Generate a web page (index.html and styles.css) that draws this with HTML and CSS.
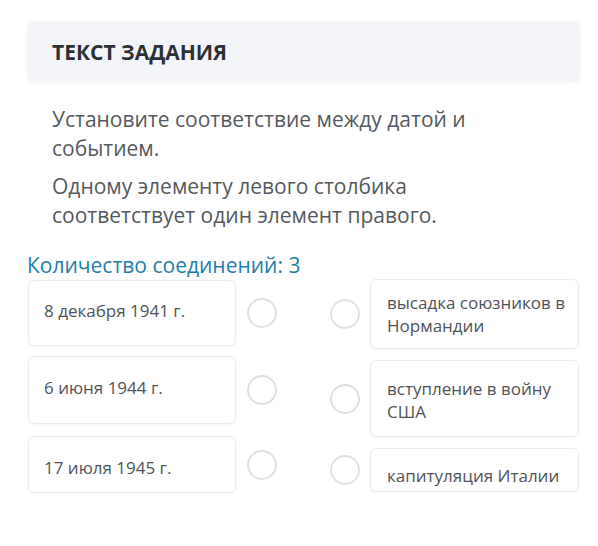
FILE: index.html
```html
<!DOCTYPE html>
<html lang="ru">
<head>
<meta charset="utf-8">
<title>Текст задания</title>
<link rel="stylesheet" href="styles.css">
</head>
<body>
<div class="page">
  <div class="task-head">
    <h2 class="task-title">ТЕКСТ ЗАДАНИЯ</h2>
  </div>
  <div class="task-text">
    <p>Установите соответствие между датой и событием.</p>
    <p>Одному элементу левого столбика соответствует один элемент правого.</p>
  </div>
  <div class="count">Количество соединений: 3</div>
  <div class="match">
    <div class="col col-left">
      <div class="row"><div class="card">8 декабря 1941 г.</div><span class="dot"></span></div>
      <div class="row"><div class="card">6 июня 1944 г.</div><span class="dot"></span></div>
      <div class="row"><div class="card">17 июля 1945 г.</div><span class="dot"></span></div>
    </div>
    <div class="col col-right">
      <div class="row"><span class="dot"></span><div class="card">высадка союзников в Нормандии</div></div>
      <div class="row"><span class="dot"></span><div class="card">вступление в войну США</div></div>
      <div class="row"><span class="dot"></span><div class="card">капитуляция Италии</div></div>
    </div>
  </div>
</div>
</body>
</html>
```

FILE: styles.css
```css
* { box-sizing: border-box; }
html, body { margin: 0; padding: 0; background: #ffffff; }
body { font-family: "Open Sans", "Noto Sans", sans-serif; color: #4f5357; }

.page { width: 598px; padding-top: 21px; }

.task-head {
  margin: 0 18px 0 27px;
  height: 61px;
  background: #f3f5f8;
  border-radius: 7px;
  box-shadow: 0 1px 3px rgba(0, 0, 0, 0.05);
  display: flex;
  align-items: center;
  padding-left: 25px;
}
.task-title {
  margin: 0;
  font-size: 21px;
  font-weight: 700;
  color: #2d3136;
}

.task-text {
  padding: 23px 98px 0 52px;
}
.task-text p {
  margin: 0 0 9px 0;
  font-size: 21px;
  line-height: 29px;
  color: #55595d;
}
.task-text p:last-child { margin-bottom: 0; }

.count {
  margin: 22px 0 0 27px;
  font-size: 21px;
  line-height: 26px;
  color: #1f7ea8;
}

.match {
  display: flex;
  gap: 53px;
  padding-left: 28px;
  margin-top: 2px;
}
.col {
  width: 249px;
  display: flex;
  flex-direction: column;
}
.row {
  display: flex;
  align-items: center;
}
.col-left .row { gap: 11px; }
.col-right .row { gap: 10px; }

.col-left .row:nth-child(1) { height: 66px; }
.col-left .row:nth-child(2) { height: 68px; margin-top: 10px; }
.col-left .row:nth-child(3) { height: 57px; margin-top: 12px; }

.col-right { margin-top: -1px; }
.col-right .row:nth-child(1) { height: 70px; }
.col-right .row:nth-child(2) { height: 77px; margin-top: 11px; }
.col-right .row:nth-child(3) { height: 44px; margin-top: 11px; }

.card {
  height: 100%;
  display: flex;
  align-items: center;
  background: #ffffff;
  border: 1px solid #ececec;
  border-radius: 6px;
  box-shadow: 0 1px 2px rgba(0, 0, 0, 0.04);
  font-size: 17px;
  line-height: 23px;
  color: #505458;
}
.col-left .card { width: 208px; padding: 0 10px 0 15px; }
.col-right .card { width: 209px; padding: 0 8px 0 16px; }

.col-left .row:nth-child(1) .card,
.col-left .row:nth-child(2) .card { padding-bottom: 6px; }
.col-left .row:nth-child(3) .card { padding-top: 6px; }
.col-right .row:nth-child(2) .card { padding-top: 3px; }
.col-right .row:nth-child(3) .card { padding-top: 10px; }

.dot {
  flex: none;
  width: 30px;
  height: 30px;
  border-radius: 50%;
  border: 2px solid #dfe0e2;
  background: #ffffff;
}
```
